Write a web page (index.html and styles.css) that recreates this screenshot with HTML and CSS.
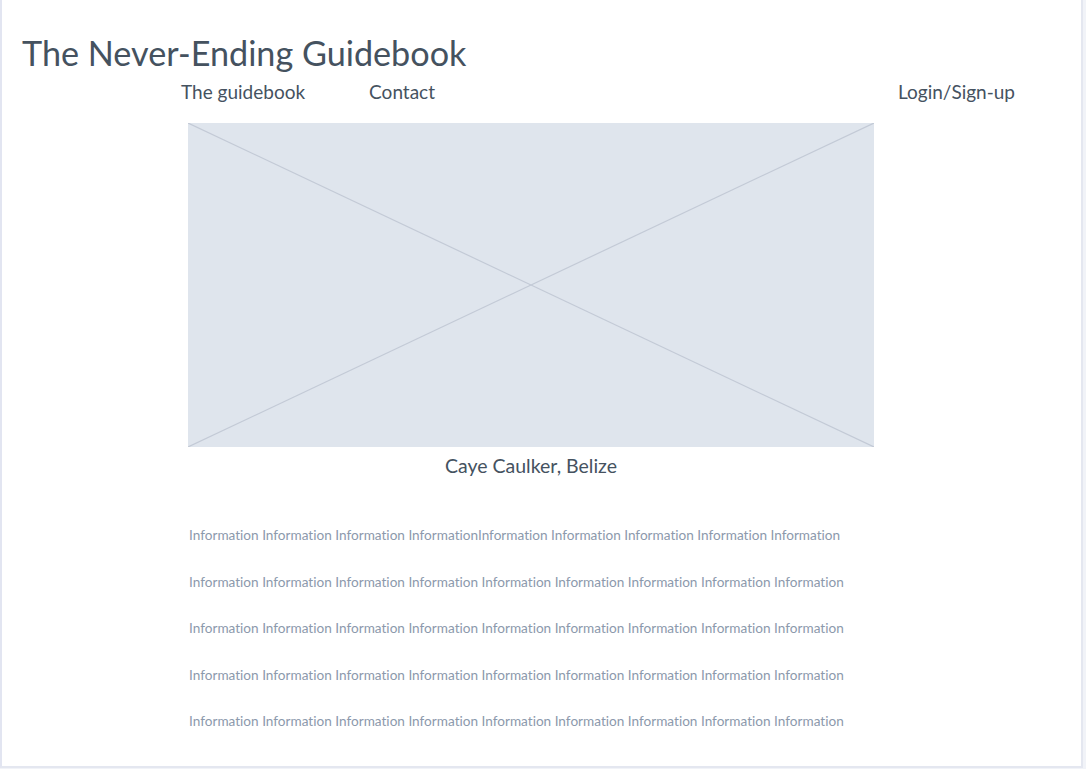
FILE: index.html
```html
<!DOCTYPE html>
<html>
<head>
<meta charset="utf-8">
<link rel="stylesheet" href="styles.css">
</head>
<body>
<div class="frame">
  <h1 class="title">The Never-Ending Guidebook</h1>
  <nav class="nav">
    <a class="nav-link">The guidebook</a>
    <a class="nav-link contact">Contact</a>
    <a class="nav-link login">Login/Sign-up</a>
  </nav>
  <figure class="hero">
    <div class="placeholder">
      <svg width="686" height="324" viewBox="0 0 686 324">
        <line x1="0" y1="0" x2="686" y2="324" stroke="#c3cad6" stroke-width="1.2"/>
        <line x1="0" y1="324" x2="686" y2="0" stroke="#c3cad6" stroke-width="1.2"/>
      </svg>
    </div>
    <figcaption class="caption">Caye Caulker, Belize</figcaption>
  </figure>
  <div class="info">
    <p>Information Information Information InformationInformation Information Information Information Information</p>
    <p>Information Information Information Information Information Information Information Information Information</p>
    <p>Information Information Information Information Information Information Information Information Information</p>
    <p>Information Information Information Information Information Information Information Information Information</p>
    <p>Information Information Information Information Information Information Information Information Information</p>
  </div>
</div>
</body>
</html>
```
FILE: styles.css
```css
html, body {
  margin: 0;
  padding: 0;
}
body {
  background: #f1f3f8;
  font-family: Lato, "Liberation Sans", sans-serif;
  font-variant-ligatures: none;
  width: 1086px;
  height: 769px;
  overflow: hidden;
}
.frame {
  box-sizing: border-box;
  width: 1083px;
  height: 768px;
  background: #fff;
  border-left: 2px solid #e2e5f1;
  border-right: 2px solid #e4e7f0;
  border-bottom: 2px solid #e4e7f0;
  padding-top: 31px;
}
.title {
  margin: 0 0 0 20px;
  font-weight: 400;
  font-size: 34.2px;
  line-height: 44px;
  color: #45525f;
}
.nav {
  display: flex;
  align-items: baseline;
  padding-left: 179px;
  padding-right: 66px;
  margin-top: 4px;
  height: 32px;
}
.nav-link {
  font-size: 19px;
  line-height: 26px;
  color: #45525f;
}
.contact {
  margin-left: 64px;
}
.login {
  margin-left: auto;
}
.hero {
  margin: 12px 0 0 186px;
  width: 686px;
}
.placeholder {
  width: 686px;
  height: 324px;
  background: #dfe5ed;
}
.placeholder svg {
  display: block;
}
.caption {
  text-align: center;
  font-size: 19.5px;
  line-height: 24px;
  margin-top: 7px;
  color: #45525f;
}
.info {
  margin-top: 34px;
  padding-left: 187px;
}
.info p {
  margin: 0;
  font-size: 13.6px;
  line-height: 46.5px;
  color: #8c99ac;
  white-space: nowrap;
}
```
